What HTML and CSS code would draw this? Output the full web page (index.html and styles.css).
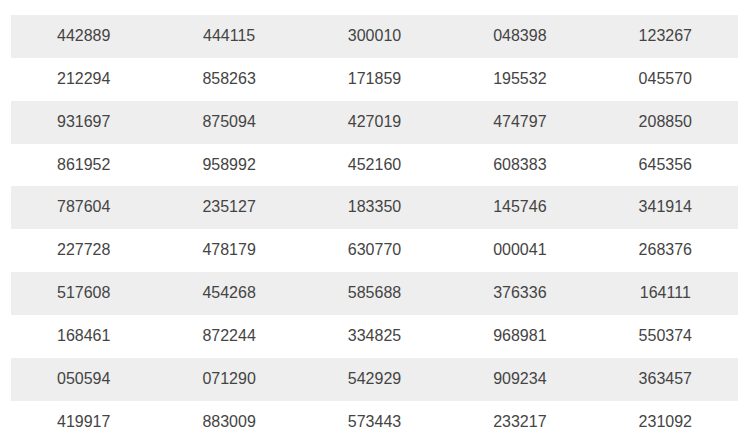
FILE: index.html
```html
<!DOCTYPE html>
<html>
<head>
<meta charset="utf-8">
<link rel="stylesheet" href="styles.css">
</head>
<body>
<div class="wrap">
<table class="grid">
<tbody>
<tr><td>442889</td><td>444115</td><td>300010</td><td>048398</td><td>123267</td></tr>
<tr><td>212294</td><td>858263</td><td>171859</td><td>195532</td><td>045570</td></tr>
<tr><td>931697</td><td>875094</td><td>427019</td><td>474797</td><td>208850</td></tr>
<tr><td>861952</td><td>958992</td><td>452160</td><td>608383</td><td>645356</td></tr>
<tr><td>787604</td><td>235127</td><td>183350</td><td>145746</td><td>341914</td></tr>
<tr><td>227728</td><td>478179</td><td>630770</td><td>000041</td><td>268376</td></tr>
<tr><td>517608</td><td>454268</td><td>585688</td><td>376336</td><td>164111</td></tr>
<tr><td>168461</td><td>872244</td><td>334825</td><td>968981</td><td>550374</td></tr>
<tr><td>050594</td><td>071290</td><td>542929</td><td>909234</td><td>363457</td></tr>
<tr><td>419917</td><td>883009</td><td>573443</td><td>233217</td><td>231092</td></tr>
</tbody>
</table>
</div>
</body>
</html>
```
FILE: styles.css
```css
html, body {
  margin: 0;
  padding: 0;
  background: #fff;
}
.wrap {
  padding: 15px 9px 0 11px;
}
.grid {
  width: 727px;
  border-collapse: collapse;
  table-layout: fixed;
  font-family: "Liberation Sans", Arial, sans-serif;
  font-size: 16px;
  line-height: 1.42857;
  color: #444;
}
.grid td {
  padding: 10px;
  text-align: center;
}
.grid tr:nth-child(odd) td {
  background: #eee;
}
```
